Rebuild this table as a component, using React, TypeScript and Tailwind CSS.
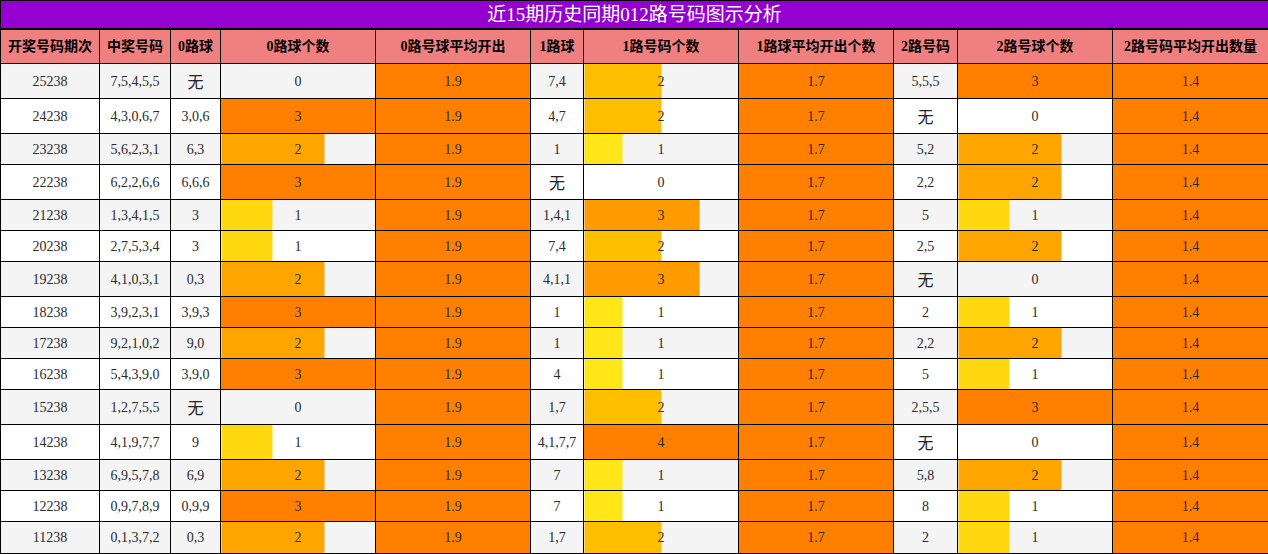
import React from "react";

type Row = {
  issue: string;
  nums: string;
  r0: string;
  c0: number;
  r1: string;
  c1: number;
  r2: string;
  c2: number;
};

const rows: Row[] = [
  { issue: "25238", nums: "7,5,4,5,5", r0: "无", c0: 0, r1: "7,4", c1: 2, r2: "5,5,5", c2: 3 },
  { issue: "24238", nums: "4,3,0,6,7", r0: "3,0,6", c0: 3, r1: "4,7", c1: 2, r2: "无", c2: 0 },
  { issue: "23238", nums: "5,6,2,3,1", r0: "6,3", c0: 2, r1: "1", c1: 1, r2: "5,2", c2: 2 },
  { issue: "22238", nums: "6,2,2,6,6", r0: "6,6,6", c0: 3, r1: "无", c1: 0, r2: "2,2", c2: 2 },
  { issue: "21238", nums: "1,3,4,1,5", r0: "3", c0: 1, r1: "1,4,1", c1: 3, r2: "5", c2: 1 },
  { issue: "20238", nums: "2,7,5,3,4", r0: "3", c0: 1, r1: "7,4", c1: 2, r2: "2,5", c2: 2 },
  { issue: "19238", nums: "4,1,0,3,1", r0: "0,3", c0: 2, r1: "4,1,1", c1: 3, r2: "无", c2: 0 },
  { issue: "18238", nums: "3,9,2,3,1", r0: "3,9,3", c0: 3, r1: "1", c1: 1, r2: "2", c2: 1 },
  { issue: "17238", nums: "9,2,1,0,2", r0: "9,0", c0: 2, r1: "1", c1: 1, r2: "2,2", c2: 2 },
  { issue: "16238", nums: "5,4,3,9,0", r0: "3,9,0", c0: 3, r1: "4", c1: 1, r2: "5", c2: 1 },
  { issue: "15238", nums: "1,2,7,5,5", r0: "无", c0: 0, r1: "1,7", c1: 2, r2: "2,5,5", c2: 3 },
  { issue: "14238", nums: "4,1,9,7,7", r0: "9", c0: 1, r1: "4,1,7,7", c1: 4, r2: "无", c2: 0 },
  { issue: "13238", nums: "6,9,5,7,8", r0: "6,9", c0: 2, r1: "7", c1: 1, r2: "5,8", c2: 2 },
  { issue: "12238", nums: "0,9,7,8,9", r0: "0,9,9", c0: 3, r1: "7", c1: 1, r2: "8", c2: 1 },
  { issue: "11238", nums: "0,1,3,7,2", r0: "0,3", c0: 2, r1: "1,7", c1: 2, r2: "2", c2: 1 },
];

const colors3 = ["", "#ffd810", "#ffa500", "#ff8000"];
const colors4 = ["", "#ffe619", "#ffbf00", "#ff9a00", "#ff8000"];

const headers = [
  "开奖号码期次",
  "中奖号码",
  "0路球",
  "0路球个数",
  "0路号球平均开出",
  "1路球",
  "1路号码个数",
  "1路球平均开出个数",
  "2路号码",
  "2路号球个数",
  "2路号码平均开出数量",
];

const widths = [99, 71, 50, 155, 155, 53, 155, 155, 64, 155, 156];

const cell = "border border-black text-center p-0 text-[14px] text-[#2b2b2b]";

const Val = ({ v }: { v: string }) =>
  v === "无" ? <span className="text-[16px] text-[#222] relative top-[2px]">无</span> : <>{v}</>;

const Bar = ({ n, max }: { n: number; max: number }) => {
  const pct = (n / max) * 100;
  const color = max === 4 ? colors4[n] : colors3[n];
  const style =
    n > 0 ? { backgroundImage: `linear-gradient(to right, ${color} ${pct}%, transparent ${pct}%)` } : undefined;
  return (
    <td className={cell} style={style}>
      {n}
    </td>
  );
};

export default function App() {
  return (
    <div className="w-[1268px] h-[554px] bg-white" style={{ fontFamily: '"Liberation Serif", "Noto Sans CJK SC", serif' }}>
      <table className="w-[1268px] table-fixed border-collapse">
        <colgroup>
          {widths.map((w, i) => (
            <col key={i} style={{ width: w }} />
          ))}
        </colgroup>
        <tbody>
          <tr className="h-[28px]">
            <td colSpan={11} className="border border-black border-b-2 bg-[#9400d0] text-white text-[19px] text-center p-0 leading-none">
              近15期历史同期012路号码图示分析
            </td>
          </tr>
          <tr className="h-[35px] bg-[#f08080]">
            {headers.map((h) => (
              <td key={h} className="border border-black text-center p-0 text-[14px] font-bold text-black whitespace-nowrap">
                {h}
              </td>
            ))}
          </tr>
          {rows.map((r, i) => {
            const tall = r.r0 === "无" || r.r1 === "无" || r.r2 === "无";
            const last = i === rows.length - 1;
            return (
              <tr
                key={r.issue}
                className={(tall ? "h-[35px] " : last ? "h-[32px] " : "h-[31px] ") + (i % 2 === 0 ? "bg-[#f4f4f4]" : "bg-white")}
              >
                <td className={cell}>{r.issue}</td>
                <td className={cell}>{r.nums}</td>
                <td className={cell}>
                  <Val v={r.r0} />
                </td>
                <Bar n={r.c0} max={3} />
                <td className={cell + " bg-[#ff8000]"}>1.9</td>
                <td className={cell}>
                  <Val v={r.r1} />
                </td>
                <Bar n={r.c1} max={4} />
                <td className={cell + " bg-[#ff8000]"}>1.7</td>
                <td className={cell}>
                  <Val v={r.r2} />
                </td>
                <Bar n={r.c2} max={3} />
                <td className={cell + " bg-[#ff8000]"}>1.4</td>
              </tr>
            );
          })}
        </tbody>
      </table>
    </div>
  );
}
